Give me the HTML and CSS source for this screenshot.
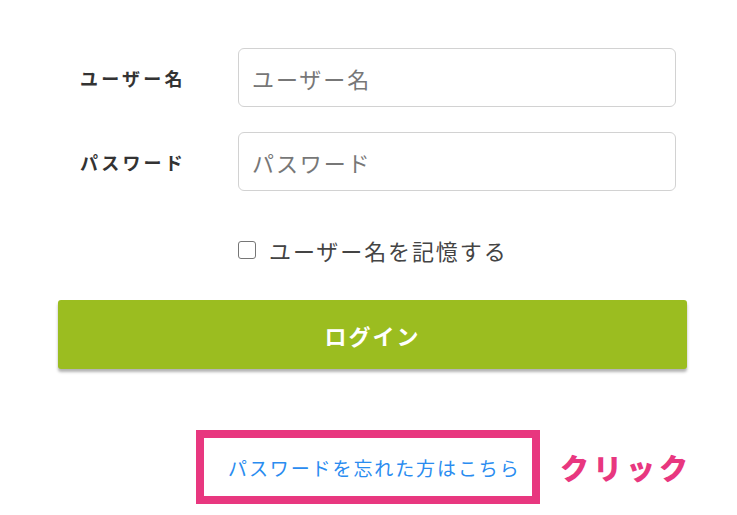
FILE: index.html
```html
<!DOCTYPE html>
<html lang="ja">
<head>
<meta charset="utf-8">
<link rel="stylesheet" href="styles.css">
</head>
<body>
<div class="page">
  <form class="login">
    <div class="row">
      <label class="label" for="user">ユーザー名</label>
      <input class="field" id="user" type="text" placeholder="ユーザー名">
    </div>
    <div class="row">
      <label class="label" for="pass">パスワード</label>
      <input class="field" id="pass" type="password" placeholder="パスワード">
    </div>
    <label class="remember">
      <input class="check" type="checkbox">
      <span>ユーザー名を記憶する</span>
    </label>
    <button class="btn" type="button">ログイン</button>
    <div class="forgot-row">
      <div class="highlight">
        <a class="forgot" href="#">パスワードを忘れた方はこちら</a>
      </div>
      <span class="click">クリック</span>
    </div>
  </form>
</div>
</body>
</html>
```

FILE: styles.css
```css
* { box-sizing: border-box; }
html, body { margin: 0; padding: 0; background: #fff; }
body {
  font-family: "Noto Sans CJK JP", "Noto Sans", sans-serif;
  color: #333;
}
.page {
  padding: 48px 0 0 58px;
}
.login {
  width: 629px;
  display: flex;
  flex-direction: column;
}
.row {
  display: flex;
  align-items: center;
  margin-bottom: 25px;
}
.label {
  width: 180px;
  padding-left: 22px;
  font-size: 18px;
  font-weight: 700;
  letter-spacing: 3.2px;
  color: #333;
}
.field {
  width: 438px;
  height: 59px;
  border: 1px solid #d2d2d2;
  border-radius: 6px;
  padding: 0 13px;
  font-family: inherit;
  font-size: 22px;
  letter-spacing: 1.9px;
  color: #333;
  outline: none;
}
.field::placeholder { color: #777; }
.remember {
  display: flex;
  align-items: center;
  margin: 18px 0 0 180px;
  gap: 13px;
  font-size: 22px;
  letter-spacing: 1.9px;
  color: #444;
}
.check {
  appearance: none;
  -webkit-appearance: none;
  width: 18px;
  height: 18px;
  margin: 0;
  border: 1.5px solid #767676;
  border-radius: 3px;
  background: #fff;
}
.btn {
  margin-top: 34px;
  height: 69px;
  width: 629px;
  border: none;
  border-radius: 3px;
  background: #9bbd20;
  color: #fff;
  font-family: inherit;
  font-size: 22px;
  font-weight: 700;
  letter-spacing: 2px;
  box-shadow: 0 3px 3px rgba(0,0,0,0.3);
}
.forgot-row {
  margin: 61px 0 0 138px;
  display: flex;
  align-items: center;
  gap: 20px;
  white-space: nowrap;
}
.highlight {
  flex: none;
  width: 344px;
  height: 74px;
  border: 8px solid #e8377f;
  display: flex;
  align-items: center;
  padding-left: 24px;
}
.forgot {
  color: #2a8cf0;
  text-decoration: none;
  font-size: 19px;
  letter-spacing: 1.9px;
}
.click {
  color: #e8377f;
  font-size: 29px;
  font-weight: 900;
  letter-spacing: 4px;
}
```
